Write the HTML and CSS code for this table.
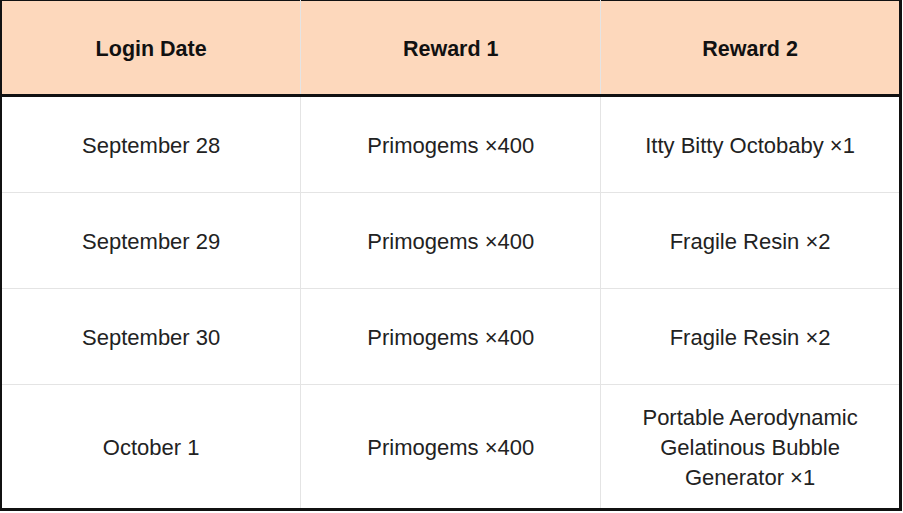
FILE: index.html
```html
<!DOCTYPE html>
<html>
<head>
<meta charset="utf-8">
<link rel="stylesheet" href="styles.css">
</head>
<body>
<table class="rewards">
  <thead>
    <tr>
      <th>Login Date</th>
      <th>Reward 1</th>
      <th>Reward 2</th>
    </tr>
  </thead>
  <tbody>
    <tr class="row">
      <td>September 28</td>
      <td>Primogems ×400</td>
      <td>Itty Bitty Octobaby ×1</td>
    </tr>
    <tr class="row">
      <td>September 29</td>
      <td>Primogems ×400</td>
      <td>Fragile Resin ×2</td>
    </tr>
    <tr class="row">
      <td>September 30</td>
      <td>Primogems ×400</td>
      <td>Fragile Resin ×2</td>
    </tr>
    <tr class="row last">
      <td>October 1</td>
      <td>Primogems ×400</td>
      <td class="wrap">Portable Aerodynamic Gelatinous Bubble Generator ×1</td>
    </tr>
  </tbody>
</table>
</body>
</html>
```

FILE: styles.css
```css
html, body {
  margin: 0;
  padding: 0;
  background: #ffffff;
}
.rewards {
  width: 902px;
  height: 510px;
  border-collapse: collapse;
  table-layout: fixed;
  font-family: "Liberation Sans", Arial, sans-serif;
  border-top: 1px solid #111111;
  border-left: 2px solid #111111;
  border-right: 3px solid #111111;
  border-bottom: 3px solid #111111;
}
.rewards th {
  background: #fdd8bc;
  color: #111111;
  font-weight: bold;
  font-size: 21.5px;
  height: 89px;
  padding: 4px 0 0;
  border-right: 1px solid #e4e4e4;
  border-bottom: 3px solid #111111;
  text-align: center;
  vertical-align: middle;
}
.rewards td {
  color: #222222;
  font-size: 22px;
  line-height: 30px;
  text-align: center;
  vertical-align: middle;
  padding: 2px 24px 0;
  height: 93px;
  border-right: 1px solid #e4e4e4;
  border-bottom: 1px solid #e4e4e4;
}
.rewards .last td {
  height: 121px;
}
.rewards .wrap {
  padding: 2px 36px 0;
}
```
